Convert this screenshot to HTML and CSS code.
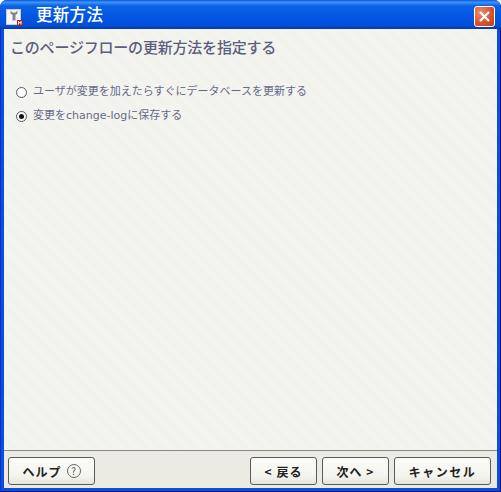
FILE: index.html
```html
<!DOCTYPE html>
<html lang="ja">
<head>
    <meta charset="UTF-8">
    <meta name="viewport" content="width=device-width, initial-scale=1.0">
    <title>更新方法</title>
    <link rel="stylesheet" href="styles.css">
</head>
<body>
    <div class="window">
        <div class="titlebar">
            <div class="app-icon">
                <svg width="18" height="18" viewBox="0 0 18 18">
                    <rect x="0.5" y="0.5" width="14" height="15" fill="#f6f6f8" stroke="#c8ccd8"/>
                    <path d="M4.5 1.5 L4.5 4.5 L6.5 6 L6.5 11.5 L9.5 11.5 L9.5 6 L11.5 4.5 L11.5 1.5 L9.5 3.5 L6.5 3.5 Z" fill="#85858d"/>
                    <rect x="11" y="11" width="5.5" height="5.5" fill="#c81818"/>
                    <path d="M12.5 15.5 V12 M15 15.5 V12 M12.5 13.7 H15" stroke="#fff" stroke-width="1" fill="none"/>
                </svg>
            </div>
            <span class="title-text">更新方法</span>
            <div class="close-btn">
                <svg width="13" height="13" viewBox="0 0 13 13">
                    <path d="M2 2 L11 11 M11 2 L2 11" stroke="#fff" stroke-width="2.2" fill="none"/>
                </svg>
            </div>
        </div>
        <div class="content">
            <h1 class="heading">このページフローの更新方法を指定する</h1>
            <div class="options">
                <label class="option"><span class="radio"></span>ユーザが変更を加えたらすぐにデータベースを更新する</label>
                <label class="option"><span class="radio checked"></span>変更をchange-logに保存する</label>
            </div>
        </div>
        <div class="footer">
            <button class="btn help-btn">ヘルプ <span class="help-mark">?</span></button>
            <div class="spacer"></div>
            <button class="btn back-btn">&lt; 戻る</button>
            <button class="btn next-btn">次へ &gt;</button>
            <button class="btn cancel-btn">キャンセル</button>
        </div>
    </div>
</body>
</html>
```

FILE: styles.css
```css
html, body {
    margin: 0;
    padding: 0;
    background: #fff;
}
body {
    font-family: "Noto Sans CJK JP", "Liberation Sans", sans-serif;
}
.window {
    width: 501px;
    height: 492px;
    box-sizing: border-box;
    display: flex;
    flex-direction: column;
    background: #0a4fd8;
    border-radius: 7px 7px 0 0;
    padding: 0 3px 3px 3px;
    border-bottom: 1px solid #00138c;
    border-left: 1px solid #0831d9;
    border-right: 1px solid #00138c;
}
.titlebar {
    height: 29px;
    margin: 0 -4px;
    flex: none;
    display: flex;
    align-items: center;
    padding: 0 5px 0 6px;
    background: linear-gradient(180deg, #0a5be0 0%, #3f94f5 8%, #0b62e6 20%, #0355e2 60%, #0350d8 88%, #0238ad 100%);
    border-radius: 7px 7px 0 0;
}
.app-icon {
    width: 18px;
    height: 18px;
    margin-top: 4px;
}
.title-text {
    margin-left: 12px;
    color: #fff;
    font-size: 16.5px;
    font-weight: 500;
    letter-spacing: 0.3px;
    margin-top: -2px;
}
.close-btn {
    margin-left: auto;
    width: 19px;
    height: 19px;
    margin-top: 3px;
    margin-right: 1px;
    display: flex;
    align-items: center;
    justify-content: center;
    background: radial-gradient(circle at 30% 30%, #e98d70, #d9502c 60%, #c23a18);
    border: 1px solid #fff;
    border-radius: 3px;
}
.content {
    flex: 1;
    background: repeating-linear-gradient(45deg, #f5f5f2 0, #f5f5f2 1px, #f1f1ec 1px, #f1f1ec 2px);
    padding: 7px 7px 0 6px;
    color: #5f6380;
}
.heading {
    margin: 0;
    font-size: 15px;
    font-weight: 500;
    line-height: 21px;
    letter-spacing: -0.2px;
    color: #5b5f7c;
}
.options {
    margin-top: 26px;
    display: flex;
    flex-direction: column;
    gap: 6px;
    padding-left: 6px;
}
.option {
    display: flex;
    align-items: center;
    font-family: "DejaVu Sans", "Noto Sans CJK JP", sans-serif;
    font-size: 11px;
    line-height: 18px;
    color: #666a88;
}
.radio {
    position: relative;
    width: 9px;
    height: 9px;
    border: 1px solid #55555f;
    border-radius: 50%;
    background: #fff;
    margin-right: 6px;
    flex: none;
}
.radio.checked::after {
    content: "";
    position: absolute;
    left: 2px;
    top: 2px;
    width: 5px;
    height: 5px;
    border-radius: 50%;
    background: #111;
}
.footer {
    height: 31px;
    flex: none;
    display: flex;
    align-items: flex-start;
    gap: 5px;
    padding: 6px 6px 0 4px;
    background: #ebeae3;
    border-top: 1px solid #8a8a86;
}
.spacer {
    flex: 1;
}
.btn {
    height: 28px;
    padding: 0;
    border: 1px solid #5b5b55;
    border-radius: 3px;
    background: linear-gradient(180deg, #fbfbf9 0%, #f4f4ef 70%, #e6e5dc 100%);
    color: #222;
    font-family: "Noto Sans CJK JP", "Liberation Sans", sans-serif;
    font-size: 12px;
    font-weight: 700;
    letter-spacing: 1px;
    display: flex;
    align-items: center;
    justify-content: center;
}
.help-btn {
    width: 87px;
}
.help-mark {
    width: 12px;
    height: 12px;
    margin-left: 5px;
    border: 1px solid #666;
    border-radius: 50%;
    font-size: 10px;
    font-weight: 400;
    line-height: 12px;
    letter-spacing: 0;
    color: #555;
}
.back-btn {
    width: 67px;
}
.next-btn {
    width: 67px;
}
.cancel-btn {
    width: 97px;
    letter-spacing: 1.5px;
}
```
